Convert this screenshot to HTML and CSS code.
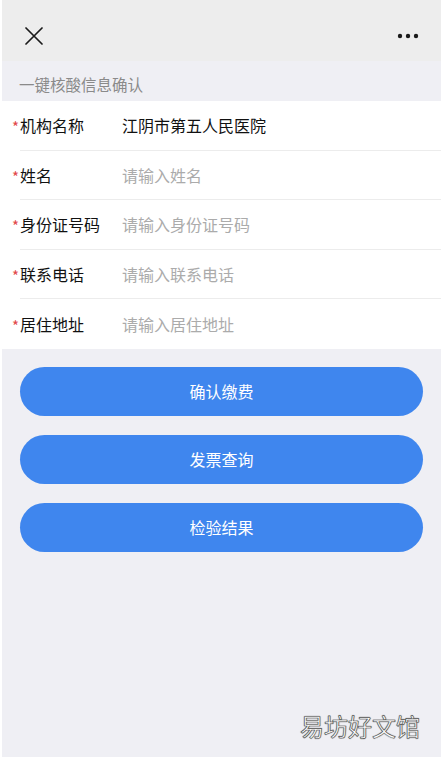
FILE: index.html
```html
<!DOCTYPE html>
<html lang="zh-CN">
<head>
<meta charset="utf-8">
<title>一键核酸信息确认</title>
<link rel="stylesheet" href="styles.css">
</head>
<body>
<div class="app">
  <header class="nav">
    <svg class="icon-close" width="18" height="18" viewBox="0 0 18 18">
      <path d="M1 1 L17 17 M17 1 L1 17" stroke="#1a1a1a" stroke-width="1.7" fill="none" stroke-linecap="round"/>
    </svg>
    <svg class="icon-more" width="22" height="6" viewBox="0 0 22 6">
      <circle cx="3" cy="3" r="2.2" fill="#1a1a1a"/>
      <circle cx="11" cy="3" r="2.2" fill="#1a1a1a"/>
      <circle cx="19" cy="3" r="2.2" fill="#1a1a1a"/>
    </svg>
  </header>
  <div class="section-title">一键核酸信息确认</div>
  <div class="form">
    <div class="row"><span class="req">*</span><span class="label">机构名称</span><span class="value">江阴市第五人民医院</span></div>
    <div class="row"><span class="req">*</span><span class="label">姓名</span><span class="value placeholder">请输入姓名</span></div>
    <div class="row"><span class="req">*</span><span class="label">身份证号码</span><span class="value placeholder">请输入身份证号码</span></div>
    <div class="row"><span class="req">*</span><span class="label">联系电话</span><span class="value placeholder">请输入联系电话</span></div>
    <div class="row"><span class="req">*</span><span class="label">居住地址</span><span class="value placeholder">请输入居住地址</span></div>
  </div>
  <div class="actions">
    <button class="btn">确认缴费</button>
    <button class="btn">发票查询</button>
    <button class="btn">检验结果</button>
  </div>
  <div class="watermark">易坊好文馆</div>
</div>
</body>
</html>
```

FILE: styles.css
```css
* { box-sizing: border-box; }
html, body { margin: 0; padding: 0; background: #ffffff; }
body {
  font-family: "PingFang SC", "Noto Sans CJK SC", "Noto Sans", sans-serif;
  width: 445px;
  height: 759px;
  overflow: hidden;
}
.app {
  position: relative;
  width: 439px;
  height: 757px;
  margin-left: 2px;
  background: #efeff4;
}
.nav {
  height: 61px;
  background: #ededed;
  display: flex;
  align-items: center;
  justify-content: space-between;
  padding: 0 22px 0 23px;
}
.icon-close { display: block; margin-top: 10px; }
.icon-more { display: block; margin-top: 10px; }
.section-title {
  height: 40px;
  padding: 13px 0 0 17px;
  font-size: 15.5px;
  line-height: 20px;
  color: #8a8a8a;
}
.form {
  background: #ffffff;
}
.row {
  display: flex;
  align-items: center;
  height: 49.5px;
  margin-left: 18px;
  border-bottom: 1px solid #ececec;
  font-size: 16px;
  color: #111111;
}
.row:last-child { border-bottom: none; }
.req {
  width: 8px;
  margin-left: -8px;
  color: #e2474a;
  font-size: 15px;
  line-height: 15px;
  margin-top: 3px;
}
.label {
  width: 102px;
  flex: none;
}
.value { color: #111111; }
.placeholder { color: #ababab; }
.actions {
  display: flex;
  flex-direction: column;
  gap: 19px;
  padding: 18px 18px 0 18px;
}
.btn {
  height: 49px;
  border: none;
  border-radius: 25px;
  background: #3f86ee;
  color: #ffffff;
  font-family: inherit;
  font-size: 16px;
  padding: 0;
}
.watermark {
  position: absolute;
  right: 21px;
  bottom: 16px;
  font-size: 24px;
  line-height: 30px;
  color: #ffffff;
  -webkit-text-stroke: 0.6px #555555;
  text-shadow: 0 0 1px #666, 0 0 1px #666;
}
```
